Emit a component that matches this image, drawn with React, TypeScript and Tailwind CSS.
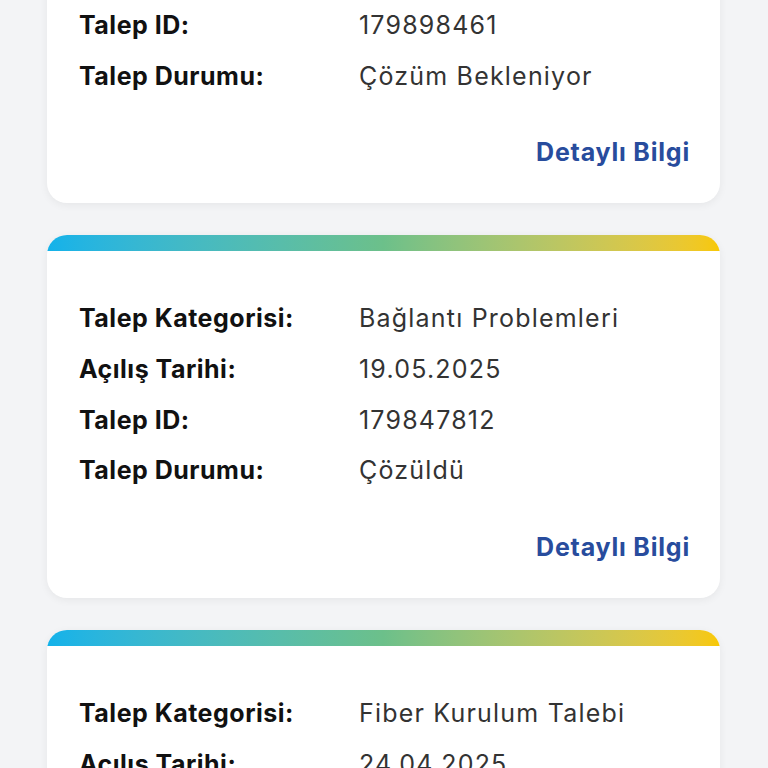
import React from 'react';

type Row = { label: string; value: string };

const cards: Row[][] = [
    [
        { label: 'Talep Kategorisi:', value: 'Arıza Kaydı' },
        { label: 'Açılış Tarihi:', value: '21.05.2025' },
        { label: 'Talep ID:', value: '179898461' },
        { label: 'Talep Durumu:', value: 'Çözüm Bekleniyor' },
    ],
    [
        { label: 'Talep Kategorisi:', value: 'Bağlantı Problemleri' },
        { label: 'Açılış Tarihi:', value: '19.05.2025' },
        { label: 'Talep ID:', value: '179847812' },
        { label: 'Talep Durumu:', value: 'Çözüldü' },
    ],
    [
        { label: 'Talep Kategorisi:', value: 'Fiber Kurulum Talebi' },
        { label: 'Açılış Tarihi:', value: '24.04.2025' },
        { label: 'Talep ID:', value: '179512034' },
        { label: 'Talep Durumu:', value: 'Çözüldü' },
    ],
];

const RequestCard: React.FC<{ rows: Row[] }> = ({ rows }) => (
    <div className="overflow-hidden rounded-[20px] bg-white shadow-[0_2px_8px_rgba(0,0,0,0.06)]">
        <div className="h-[16px] bg-gradient-to-r from-[#12b2ea] via-[#6cc08a] to-[#f8c800]" />
        <div className="px-[32px] pb-[25px] pt-[43px]">
            {rows.map((row) => (
                <div key={row.label} className="flex h-[50.7px] items-center text-[25px]">
                    <div className="w-[280px] shrink-0 font-bold tracking-[0.5px] text-[#111111]">
                        {row.label}
                    </div>
                    <div className="tracking-[1.2px] text-[#333333]">{row.value}</div>
                </div>
            ))}
            <div className="-mr-[2px] mt-[26px] flex h-[50px] items-center justify-end">
                <span className="text-[25px] font-bold tracking-[0.8px] text-[#284c9d]">
                    Detaylı Bilgi
                </span>
            </div>
        </div>
    </div>
);

export default function App() {
    return (
        <div
            className="h-[768px] overflow-hidden bg-[#f3f4f6]"
            style={{ fontFamily: '"Inter", "Noto Sans", sans-serif' }}
        >
            <div className="-mt-[160px] flex flex-col gap-[32px] pl-[47px] pr-[48px]">
                {cards.map((rows, i) => (
                    <RequestCard key={i} rows={rows} />
                ))}
            </div>
        </div>
    );
}
